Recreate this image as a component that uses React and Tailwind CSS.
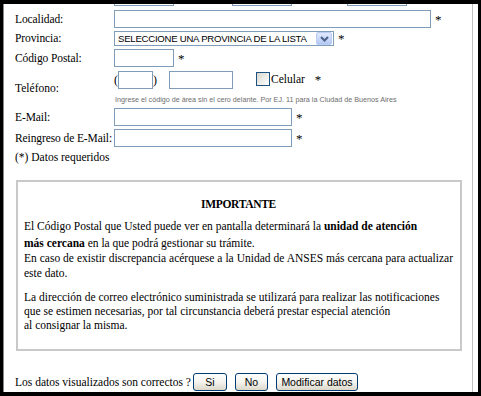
import React from "react";

const serif = { fontFamily: '"Liberation Serif", "Times New Roman", serif' };
const sans = { fontFamily: '"Liberation Sans", Arial, sans-serif' };

const Input = ({ w }) => (
  <div className={`h-[18px] ${w} border border-[#7f9db9] bg-white shrink-0`} />
);

const Star = ({ ml = "ml-[4px]" }) => (
  <span className={`${ml} text-[13px] leading-none`}>*</span>
);

const Row = ({ label, children, mt = "mt-[3px]", h = "h-[18px]" }) => (
  <div className={`flex items-center ${h} ${mt}`}>
    <div className="w-[99px] shrink-0 text-[11.5px] leading-[15px] tracking-[-0.1px] whitespace-nowrap">
      {label}
    </div>
    <div className="flex items-center">{children}</div>
  </div>
);

const XpButton = ({ w, children }) => (
  <button
    className={`${w} h-[18px] border border-[#003c74] rounded-[3px] bg-linear-to-b from-white via-[#f4f3ee] to-[#dcd8cb] text-[10.5px] leading-none text-black shrink-0`}
    style={sans}>
    {children}
  </button>
);

export default function App() {
  return (
    <div className="w-[481px] h-[396px] bg-black pt-[4px] pl-[3px] pr-[3px] pb-[4px]">
      <div className="h-full bg-white overflow-hidden flex border-l border-[#8a8a8a]">
        <div
          className="w-[469px] shrink-0 h-full border-r border-[#c0c0c0] flex flex-col pl-[11px] text-black"
          style={serif}>
          {/* fila anterior, cortada por el scroll */}
          <div className="flex h-[18px] mt-[-16px]">
            <div className="w-[99px] shrink-0" />
            <Input w="w-[60px]" />
            <div className="w-[58px]" />
            <Input w="w-[60px]" />
            <div className="w-[55px]" />
            <Input w="w-[60px]" />
          </div>

          <Row label="Localidad:" mt="mt-[4px]">
            <Input w="w-[317px]" />
            <Star />
          </Row>

          <Row label="Provincia:" h="h-[15px]" mt="mt-[3px]">
            <div className="w-[220px] h-[15px] border border-[#7f9db9] bg-white flex items-center justify-between pl-[3px] pr-px">
              <span
                className="text-[9.6px] leading-none tracking-[-0.25px] whitespace-nowrap"
                style={sans}>
                SELECCIONE UNA PROVINCIA DE LA LISTA
              </span>
              <span className="w-[16px] h-[13px] shrink-0 rounded-[2px] border border-[#b9cdf5] bg-linear-to-b from-[#e0e9fd] to-[#b4c8f5] flex items-center justify-center">
                <svg width="9" height="6" viewBox="0 0 9 6">
                  <path
                    d="M1 1 L4.5 4.5 L8 1"
                    fill="none"
                    stroke="#4d6185"
                    strokeWidth="2"
                  />
                </svg>
              </span>
            </div>
            <Star />
          </Row>

          <Row label="Código Postal:" mt="mt-[3px]">
            <Input w="w-[60px]" />
            <Star />
          </Row>

          <div className="flex items-center mt-[4px]">
            <div className="w-[99px] shrink-0 text-[11.5px] leading-[15px] pt-[1px]">
              Teléfono:
            </div>
            <div className="flex flex-col">
              <div className="flex items-center h-[18px]">
                <span className="text-[12px] leading-none w-[4px]">(</span>
                <Input w="w-[35px]" />
                <span className="text-[12px] leading-none w-[16px]">)</span>
                <Input w="w-[64px]" />
                <div className="w-[23px]" />
                <div className="flex items-end self-start h-[15px]">
                  <span className="w-[14px] h-[14px] border border-[#1c5180] bg-linear-to-br from-[#d8d8d0] to-white shrink-0" />
                  <span className="text-[11.5px] leading-[13px] ml-[1px]">Celular</span>
                  <span className="text-[13px] leading-[13px] ml-[10px]">*</span>
                </div>
              </div>
              <div
                className="h-[10px] mt-[6px] text-[7.2px] leading-[10px] text-[#6d6d6d] whitespace-nowrap pl-px"
                style={sans}>
                Ingrese el código de área sin el cero delante. Por EJ. 11 para la Ciudad de Buenos Aires
              </div>
            </div>
          </div>

          <Row label="E-Mail:" mt="mt-[3px]">
            <Input w="w-[178px]" />
            <Star />
          </Row>

          <Row label="Reingreso de E-Mail:" mt="mt-[3px]">
            <Input w="w-[178px]" />
            <Star />
          </Row>

          <div className="mt-[3px] h-[15px] text-[11.5px] leading-[15px]">(*) Datos requeridos</div>

          <div className="mt-[15px] ml-[1px] w-[446px] h-[171px] shrink-0 border-2 border-[#c9c9c9] pl-[6px] pr-[7px] pt-[15px] text-[11.5px]">
            <div className="text-center font-bold leading-[15px] tracking-[-0.3px]">IMPORTANTE</div>
            <div className="mt-[7px] leading-[15px]">
              <div className="whitespace-nowrap">
                El Código Postal que Usted puede ver en pantalla determinará la{" "}
                <b>unidad de atención</b>
              </div>
              <div className="mt-[2px] whitespace-nowrap">
                <b>más cercana</b> en la que podrá gestionar su trámite.
              </div>
              <div className="text-justify [text-align-last:justify]">
                En caso de existir discrepancia acérquese a la Unidad de ANSES más cercana para actualizar
              </div>
              <div>este dato.</div>
            </div>
            <div className="mt-[9px] leading-[14px] whitespace-nowrap">
              <div>
                La dirección de correo electrónico suministrada se utilizará para realizar las notificaciones
              </div>
              <div>que se estimen necesarias, por tal circunstancia deberá prestar especial atención</div>
              <div>al consignar la misma.</div>
            </div>
          </div>

          <div className="mt-[22px] flex items-center h-[18px]">
            <span className="text-[11.5px] leading-[15px] whitespace-nowrap">
              Los datos visualizados son correctos ?
            </span>
            <div className="ml-[2px] flex items-center gap-[8px]">
              <XpButton w="w-[34px]">Si</XpButton>
              <XpButton w="w-[33px]">No</XpButton>
              <XpButton w="w-[82px]">Modificar datos</XpButton>
            </div>
          </div>
        </div>
      </div>
    </div>
  );
}
